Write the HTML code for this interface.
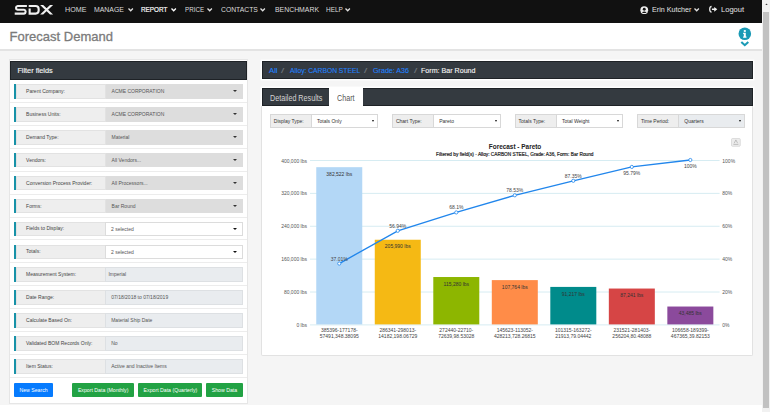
<!DOCTYPE html>
<html><head><meta charset="utf-8"><style>
*{box-sizing:border-box;margin:0;padding:0}
html,body{width:770px;height:412px;overflow:hidden;background:#fff;font-family:"Liberation Sans",sans-serif}
.a{position:absolute}
.t{position:absolute;white-space:nowrap;line-height:1}
#nav{left:0;top:0;width:762px;height:22.8px;background:#111}
.ni{color:#dcdcdc;font-size:7px;top:6px}
#hdr{left:0;top:22.8px;width:762px;height:26.2px;background:#fff}
#bg{left:0;top:49px;width:762px;height:356px;background:#f5f5f5;border-top:2px solid #e3e3e3}
.card{background:#fff}
.dark{background:#343a40;border:0.6px solid #1e2226}
.sep{position:absolute;left:10px;width:237px;height:0.8px;background:#ececec}
.row{position:absolute;left:13.5px;width:229.8px;height:14.5px}
.tb{position:absolute;left:0;top:0;width:2.3px;height:100%;background:#1792a8}
.lb{position:absolute;left:2.3px;top:0;width:90.2px;height:100%;background:#eee;border:0.5px solid #e2e2e2}
.vb{position:absolute;left:92.5px;top:0;width:137.3px;height:100%;background:#ddd}
.vw{background:#fff;border:0.6px solid #dcdcdc;left:91.7px;width:138.1px}
.vr{background:#e9ecef;border:0.5px solid #dde0e3;left:91.9px;width:137.9px}
.lt{position:absolute;left:9.3px;top:3.9px;font-size:5px;color:#444;white-space:nowrap;line-height:1}
.vt{position:absolute;left:6.5px;top:5.2px;font-size:5px;color:#555;white-space:nowrap;line-height:1}
.car{position:absolute;right:6px;top:6.3px;width:0;height:0;border-left:2px solid transparent;border-right:2px solid transparent;border-top:2.2px solid #333}
.btn{position:absolute;top:383.2px;height:13.6px;color:#fff;font-size:5.2px;text-align:center;line-height:15.8px;border-radius:1px}
.sel{position:absolute;top:113.6px;height:14px;border:0.6px solid #d8d8d8;background:#fff}
.sl{position:absolute;left:0;top:0;height:100%;background:#eee;border-right:0.6px solid #d8d8d8}
.st{position:absolute;font-size:5px;color:#333;top:4.3px;white-space:nowrap;line-height:1}
.sc{position:absolute;top:5.2px;width:0;height:0;border-left:1.8px solid transparent;border-right:1.8px solid transparent;border-top:2.4px solid #111}

</style></head><body>
<div id="nav" class="a">
<svg class="a" style="left:0;top:0" width="60" height="22" viewBox="0 0 60 22"><g fill="none" stroke="#f0f0f0" stroke-width="2.1"><path d="M26.9,6.05 H17.6 A1.9,1.9 0 0 0 17.6,9.8 H24 A1.92,1.92 0 0 1 24,13.6 H14.7"/><path d="M28.7,6.05 H35.6 A3.05,3.05 0 0 1 38.65,9.1 V10.55 A3.05,3.05 0 0 1 35.6,13.6 H29.65 V8.4"/></g><path d="M40.1,5.0 H43.2 L53.1,14.6 H50Z M50,5.0 H53.1 L43.2,14.6 H40.1Z" fill="#f0f0f0"/></svg>
<div class="t" style="left:64.7px;top:5.64px;font-size:7.8px;color:#dcdcdc;transform:scaleX(0.915);transform-origin:0 0;">HOME</div>
<div class="t" style="left:94px;top:5.64px;font-size:7.8px;color:#dcdcdc;transform:scaleX(0.887);transform-origin:0 0;">MANAGE</div>
<svg class="a" style="left:127.6px;top:8.0px;overflow:visible" width="5.4" height="3.1"><polyline points="0.5,0.5 2.7,2.8000000000000003 4.9,0.5" fill="none" stroke="#e0e0e0" stroke-width="1.3"/></svg>
<div class="t" style="left:141.2px;top:5.64px;font-size:7.8px;color:#fff;transform:scaleX(0.813);transform-origin:0 0;-webkit-text-stroke:0.2px #fff">REPORT</div>
<svg class="a" style="left:170.6px;top:8.0px;overflow:visible" width="5.4" height="3.1"><polyline points="0.5,0.5 2.7,2.8000000000000003 4.9,0.5" fill="none" stroke="#fff" stroke-width="1.3"/></svg>
<div class="t" style="left:184.7px;top:5.64px;font-size:7.8px;color:#dcdcdc;transform:scaleX(0.801);transform-origin:0 0;">PRICE</div>
<svg class="a" style="left:206.6px;top:8.0px;overflow:visible" width="5.4" height="3.1"><polyline points="0.5,0.5 2.7,2.8000000000000003 4.9,0.5" fill="none" stroke="#e0e0e0" stroke-width="1.3"/></svg>
<div class="t" style="left:220.9px;top:5.64px;font-size:7.8px;color:#dcdcdc;transform:scaleX(0.872);transform-origin:0 0;">CONTACTS</div>
<svg class="a" style="left:260.2px;top:8.0px;overflow:visible" width="5.4" height="3.1"><polyline points="0.5,0.5 2.7,2.8000000000000003 4.9,0.5" fill="none" stroke="#e0e0e0" stroke-width="1.3"/></svg>
<div class="t" style="left:274.6px;top:5.64px;font-size:7.8px;color:#dcdcdc;transform:scaleX(0.883);transform-origin:0 0;">BENCHMARK</div>
<div class="t" style="left:326px;top:5.64px;font-size:7.8px;color:#dcdcdc;transform:scaleX(0.829);transform-origin:0 0;">HELP</div>
<svg class="a" style="left:345.4px;top:8.0px;overflow:visible" width="5.4" height="3.1"><polyline points="0.5,0.5 2.7,2.8000000000000003 4.9,0.5" fill="none" stroke="#e0e0e0" stroke-width="1.3"/></svg>
<svg class="a" style="left:640px;top:5.6px" width="8.5" height="8.5" viewBox="0 0 10 10"><circle cx="5" cy="5" r="4.6" fill="#ececec"/><circle cx="5" cy="3.8" r="1.7" fill="#111"/><path d="M2.3,7.6 Q5,5.4 7.7,7.6 Q5,9.0 2.3,7.6Z" fill="#111"/></svg>
<div class="t" style="left:651.5px;top:6.34px;font-size:7.8px;color:#e4e4e4;transform:scaleX(0.920);transform-origin:0 0;">Erin Kutcher</div>
<svg class="a" style="left:694.2px;top:8.0px;overflow:visible" width="5.4" height="3.1"><polyline points="0.5,0.5 2.7,2.8000000000000003 4.9,0.5" fill="none" stroke="#e0e0e0" stroke-width="1.3"/></svg>
<svg class="a" style="left:708px;top:5.2px" width="10" height="9" viewBox="0 0 10 9"><path d="M3.6,1.5 Q1.7,1.5 1.7,4.3 Q1.7,7.1 3.6,7.1" fill="none" stroke="#e6e6e6" stroke-width="1.3"/><path d="M3.9,3.5 H6.2 V1.9 L9.3,4.3 L6.2,6.7 V5.1 H3.9Z" fill="#f0f0f0"/></svg>
<div class="t" style="left:720.5px;top:6.34px;font-size:7.8px;color:#e4e4e4;transform:scaleX(0.968);transform-origin:0 0;">Logout</div>
</div>
<div id="hdr" class="a"><div class="t" style="left:9.6px;top:7.2px;font-size:13px;color:#7b7b7b;-webkit-text-stroke:0.3px #7b7b7b">Forecast Demand</div></div>
<svg class="a" style="left:738px;top:27.1px" width="14" height="20" viewBox="0 0 14 20"><circle cx="6.8" cy="6.7" r="6.3" fill="#1a9ab5"/><rect x="5.8" y="3.1" width="2" height="1.8" fill="#fff"/><path d="M5.1,5.8 H7.8 V9.4 H8.5 V10.8 H5.1 V9.4 H5.8 V7.1 H5.1Z" fill="#fff"/><polyline points="3.3,15.0 6.8,18.2 10.3,15.0" fill="none" stroke="#1a9ab5" stroke-width="2.1"/></svg>
<div id="bg" class="a"></div>
<div class="a" style="left:762px;top:0;width:8px;height:412px;background:#f1f1f1"></div>
<div class="a" style="left:763px;top:11.9px;width:6px;height:396px;background:#c1c1c1"></div>
<svg class="a" style="left:764.5px;top:3px" width="3" height="2.4" viewBox="0 0 3 2.4"><path d="M0,2.4 L1.5,0.4 L3,2.4Z" fill="#404040"/></svg>
<div class="a card" style="left:8.7px;top:58.5px;width:239.5px;height:345px;border:0.6px solid #e6e6e6"></div>
<div class="a dark" style="left:10px;top:61px;width:237px;height:18.5px"></div>
<div class="t" style="left:17.4px;top:67.2px;font-size:7.3px;color:#f2f2f2;-webkit-text-stroke:0.15px #f2f2f2">Filter fields</div>
<div class="sep" style="top:102.00px"></div>
<div class="row" style="top:84.20px"><div class="tb"></div><div class="lb"><div class="lt">Parent Company:</div></div><div class="vb"><div class="vt" style="left:5.6px;top:5.2px">ACME CORPORATION</div><div class="car"></div></div></div>
<div class="sep" style="top:124.90px"></div>
<div class="row" style="top:107.10px"><div class="tb"></div><div class="lb"><div class="lt">Business Units:</div></div><div class="vb"><div class="vt" style="left:5.6px;top:5.2px">ACME CORPORATION</div><div class="car"></div></div></div>
<div class="sep" style="top:147.80px"></div>
<div class="row" style="top:130.00px"><div class="tb"></div><div class="lb"><div class="lt">Demand Type:</div></div><div class="vb"><div class="vt" style="left:5.6px;top:5.2px">Material</div><div class="car"></div></div></div>
<div class="sep" style="top:170.70px"></div>
<div class="row" style="top:152.90px"><div class="tb"></div><div class="lb"><div class="lt">Vendors:</div></div><div class="vb"><div class="vt" style="left:5.6px;top:5.2px">All Vendors...</div><div class="car"></div></div></div>
<div class="sep" style="top:193.60px"></div>
<div class="row" style="top:175.80px"><div class="tb"></div><div class="lb"><div class="lt">Conversion Process Provider:</div></div><div class="vb"><div class="vt" style="left:5.6px;top:5.2px">All Processors...</div><div class="car"></div></div></div>
<div class="sep" style="top:216.50px"></div>
<div class="row" style="top:198.70px"><div class="tb"></div><div class="lb"><div class="lt">Forms:</div></div><div class="vb"><div class="vt" style="left:5.6px;top:5.2px">Bar Round</div><div class="car"></div></div></div>
<div class="sep" style="top:239.40px"></div>
<div class="row" style="top:221.60px"><div class="tb"></div><div class="lb"><div class="lt">Fields to Display:</div></div><div class="vb vw"><div class="vt" style="left:4.8px;top:4.1px">2 selected</div><div class="car" style="border-top-color:#111;top:5.4px;right:5.6px"></div></div></div>
<div class="sep" style="top:262.30px"></div>
<div class="row" style="top:244.50px"><div class="tb"></div><div class="lb"><div class="lt">Totals:</div></div><div class="vb vw"><div class="vt" style="left:4.8px;top:4.1px">2 selected</div><div class="car" style="border-top-color:#111;top:5.4px;right:5.6px"></div></div></div>
<div class="sep" style="top:285.20px"></div>
<div class="row" style="top:267.40px"><div class="tb"></div><div class="lb"><div class="lt">Measurement System:</div></div><div class="vb vr"><div class="vt" style="left:2.0px;top:4.1px">Imperial</div></div></div>
<div class="sep" style="top:308.10px"></div>
<div class="row" style="top:290.30px"><div class="tb"></div><div class="lb"><div class="lt">Date Range:</div></div><div class="vb vr"><div class="vt" style="left:4.8px;top:4.1px">07/18/2018 to 07/18/2019</div></div></div>
<div class="sep" style="top:331.00px"></div>
<div class="row" style="top:313.20px"><div class="tb"></div><div class="lb"><div class="lt">Calculate Based On:</div></div><div class="vb vr"><div class="vt" style="left:4.8px;top:4.1px">Material Ship Date</div></div></div>
<div class="sep" style="top:353.90px"></div>
<div class="row" style="top:336.10px"><div class="tb"></div><div class="lb"><div class="lt">Validated BOM Records Only:</div></div><div class="vb vr"><div class="vt" style="left:4.8px;top:4.1px">No</div></div></div>
<div class="sep" style="top:376.80px"></div>
<div class="row" style="top:359.00px"><div class="tb"></div><div class="lb"><div class="lt">Item Status:</div></div><div class="vb vr"><div class="vt" style="left:4.8px;top:4.1px">Active and Inactive Items</div></div></div>
<div class="btn" style="left:14.2px;width:38.8px;background:#067bfe">New Search</div>
<div class="btn" style="left:72.3px;width:61.7px;background:#22a244">Export Data (Monthly)</div>
<div class="btn" style="left:138.3px;width:64.2px;background:#22a244">Export Data (Quarterly)</div>
<div class="btn" style="left:206.2px;width:36.5px;background:#22a244">Show Data</div>
<div class="a dark" style="left:262px;top:61px;width:490.6px;height:18.4px;box-shadow:0 0 0 1.4px #fff"></div>
<div class="t" style="left:268.9px;top:66.90px;font-size:7.4px;color:#2281fb;transform:scaleX(1.046);transform-origin:0 0;-webkit-text-stroke:0.12px #2281fb">All</div>
<div class="t" style="left:281.4px;top:66.90px;font-size:7.4px;color:#6f757c;transform:scaleX(1.557);transform-origin:0 0;-webkit-text-stroke:0.12px #6f757c">/</div>
<div class="t" style="left:289.9px;top:66.90px;font-size:7.4px;color:#2281fb;transform:scaleX(0.908);transform-origin:0 0;-webkit-text-stroke:0.12px #2281fb">Alloy: CARBON STEEL</div>
<div class="t" style="left:364.4px;top:66.90px;font-size:7.4px;color:#6f757c;transform:scaleX(1.557);transform-origin:0 0;-webkit-text-stroke:0.12px #6f757c">/</div>
<div class="t" style="left:372.9px;top:66.90px;font-size:7.4px;color:#2281fb;transform:scaleX(0.964);transform-origin:0 0;-webkit-text-stroke:0.12px #2281fb">Grade: A36</div>
<div class="t" style="left:413.8px;top:66.90px;font-size:7.4px;color:#6f757c;transform:scaleX(1.557);transform-origin:0 0;-webkit-text-stroke:0.12px #6f757c">/</div>
<div class="t" style="left:421.4px;top:66.90px;font-size:7.4px;color:#f4f4f4;transform:scaleX(0.962);transform-origin:0 0;-webkit-text-stroke:0.12px #f4f4f4">Form: Bar Round</div>
<div class="a dark" style="left:262px;top:87.6px;width:490.6px;height:18.6px;box-shadow:0 0 0 1.4px #fff"></div>
<div class="a" style="left:329.3px;top:86.5px;width:33.4px;height:19.7px;background:#fff"></div>
<div class="t" style="left:269.9px;top:94.78px;font-size:8.2px;color:#d4d4d4;transform:scaleX(0.878);transform-origin:0 0;">Detailed Results</div>
<div class="t" style="left:337.3px;top:94.78px;font-size:8.2px;color:#555;transform:scaleX(0.878);transform-origin:0 0;">Chart</div>
<div class="a card" style="left:261px;top:106px;width:491.8px;height:249.5px;border:0.6px solid #e2e2e2;border-top:none;border-radius:0 0 2px 2px"></div>
<div class="sel" style="left:269.7px;width:108.6px;background:#fff"><div class="sl" style="width:40.9px"></div><div class="st" style="left:3.1px">Display Type:</div><div class="st" style="left:46.3px">Totals Only</div><div class="sc" style="left:101.3px"></div></div>
<div class="sel" style="left:391.8px;width:109.3px;background:#fff"><div class="sl" style="width:41.0px"></div><div class="st" style="left:3.1px">Chart Type:</div><div class="st" style="left:46.4px">Pareto</div><div class="sc" style="left:102.0px"></div></div>
<div class="sel" style="left:514.5px;width:108.6px;background:#fff"><div class="sl" style="width:41.1px"></div><div class="st" style="left:3.1px">Totals Type:</div><div class="st" style="left:46.5px">Total Weight</div><div class="sc" style="left:101.3px"></div></div>
<div class="sel" style="left:636.9px;width:108.3px;background:#e9ecef"><div class="sl" style="width:41.0px"></div><div class="st" style="left:3.1px">Time Period:</div><div class="st" style="left:46.4px">Quarters</div><div class="sc" style="left:101.0px"></div></div>
<svg class="a" style="left:0;top:0" width="770" height="412" viewBox="0 0 770 412" font-family="Liberation Sans"><line x1="310" y1="324.90" x2="719.6" y2="324.90" stroke="#d6ecf2" stroke-width="1"/><line x1="310" y1="292.02" x2="719.6" y2="292.02" stroke="#d6ecf2" stroke-width="1"/><line x1="310" y1="259.14" x2="719.6" y2="259.14" stroke="#d6ecf2" stroke-width="1"/><line x1="310" y1="226.26" x2="719.6" y2="226.26" stroke="#d6ecf2" stroke-width="1"/><line x1="310" y1="193.38" x2="719.6" y2="193.38" stroke="#d6ecf2" stroke-width="1"/><line x1="310" y1="160.50" x2="719.6" y2="160.50" stroke="#d6ecf2" stroke-width="1"/><text x="307" y="326.90" text-anchor="end" font-size="5" fill="#555">0 lbs</text><text x="722.3" y="327.00" font-size="5" fill="#555">0%</text><text x="307" y="294.02" text-anchor="end" font-size="5" fill="#555">80,000 lbs</text><text x="722.3" y="294.12" font-size="5" fill="#555">20%</text><text x="307" y="261.14" text-anchor="end" font-size="5" fill="#555">160,000 lbs</text><text x="722.3" y="261.24" font-size="5" fill="#555">40%</text><text x="307" y="228.26" text-anchor="end" font-size="5" fill="#555">240,000 lbs</text><text x="722.3" y="228.36" font-size="5" fill="#555">60%</text><text x="307" y="195.38" text-anchor="end" font-size="5" fill="#555">320,000 lbs</text><text x="722.3" y="195.48" font-size="5" fill="#555">80%</text><text x="307" y="162.50" text-anchor="end" font-size="5" fill="#555">400,000 lbs</text><text x="722.3" y="162.60" font-size="5" fill="#555">100%</text><rect x="316.26" y="167.18" width="46" height="157.22" fill="#b3d7f6"/><text x="339.26" y="175.78" text-anchor="middle" font-size="5" fill="#333">382,522 lbs</text><text x="339.26" y="331.80" text-anchor="middle" font-size="5" fill="#444">385396-177178-</text><text x="339.26" y="337.60" text-anchor="middle" font-size="5" fill="#444">57491,348.38095</text><rect x="374.77" y="239.74" width="46" height="84.66" fill="#f5b914"/><text x="397.77" y="248.34" text-anchor="middle" font-size="5" fill="#333">205,990 lbs</text><text x="397.77" y="331.80" text-anchor="middle" font-size="5" fill="#444">286341-298013-</text><text x="397.77" y="337.60" text-anchor="middle" font-size="5" fill="#444">14182,198.06729</text><rect x="433.29" y="277.02" width="46" height="47.38" fill="#8db600"/><text x="456.29" y="285.62" text-anchor="middle" font-size="5" fill="#333">115,280 lbs</text><text x="456.29" y="331.80" text-anchor="middle" font-size="5" fill="#444">272440-22710-</text><text x="456.29" y="337.60" text-anchor="middle" font-size="5" fill="#444">72639,98.53028</text><rect x="491.80" y="280.11" width="46" height="44.29" fill="#ff8c48"/><text x="514.80" y="288.71" text-anchor="middle" font-size="5" fill="#333">107,764 lbs</text><text x="514.80" y="331.80" text-anchor="middle" font-size="5" fill="#444">145623-113052-</text><text x="514.80" y="337.60" text-anchor="middle" font-size="5" fill="#444">428213,728.26815</text><rect x="550.31" y="286.91" width="46" height="37.49" fill="#008b8b"/><text x="573.31" y="295.51" text-anchor="middle" font-size="5" fill="#333">91,217 lbs</text><text x="573.31" y="331.80" text-anchor="middle" font-size="5" fill="#444">101315-163272-</text><text x="573.31" y="337.60" text-anchor="middle" font-size="5" fill="#444">21913,79.04442</text><rect x="608.83" y="288.54" width="46" height="35.86" fill="#d64545"/><text x="631.83" y="297.14" text-anchor="middle" font-size="5" fill="#333">87,241 lbs</text><text x="631.83" y="331.80" text-anchor="middle" font-size="5" fill="#444">231521-281403-</text><text x="631.83" y="337.60" text-anchor="middle" font-size="5" fill="#444">256204,80.48088</text><rect x="667.34" y="306.53" width="46" height="17.87" fill="#8b4a9c"/><text x="690.34" y="315.13" text-anchor="middle" font-size="5" fill="#333">43,485 lbs</text><text x="690.34" y="331.80" text-anchor="middle" font-size="5" fill="#444">106658-189399-</text><text x="690.34" y="337.60" text-anchor="middle" font-size="5" fill="#444">467365,39.82153</text><polyline points="339.26,263.56 397.77,230.79 456.29,212.44 514.80,195.30 573.31,180.80 631.83,166.92 690.34,160.00" fill="none" stroke="#2186ec" stroke-width="1.35"/><circle cx="339.26" cy="263.56" r="1.6" fill="#fff" stroke="#2186ec" stroke-width="0.8"/><text x="339.26" y="260.56" text-anchor="middle" font-size="5" fill="#444">37.01%</text><circle cx="397.77" cy="230.79" r="1.6" fill="#fff" stroke="#2186ec" stroke-width="0.8"/><text x="397.77" y="227.79" text-anchor="middle" font-size="5" fill="#444">56.94%</text><circle cx="456.29" cy="212.44" r="1.6" fill="#fff" stroke="#2186ec" stroke-width="0.8"/><text x="456.29" y="209.44" text-anchor="middle" font-size="5" fill="#444">68.1%</text><circle cx="514.80" cy="195.30" r="1.6" fill="#fff" stroke="#2186ec" stroke-width="0.8"/><text x="514.80" y="192.30" text-anchor="middle" font-size="5" fill="#444">78.53%</text><circle cx="573.31" cy="180.80" r="1.6" fill="#fff" stroke="#2186ec" stroke-width="0.8"/><text x="573.31" y="177.80" text-anchor="middle" font-size="5" fill="#444">87.35%</text><circle cx="631.83" cy="166.92" r="1.6" fill="#fff" stroke="#2186ec" stroke-width="0.8"/><text x="631.83" y="174.82" text-anchor="middle" font-size="5" fill="#444">95.79%</text><circle cx="690.34" cy="160.00" r="1.6" fill="#fff" stroke="#2186ec" stroke-width="0.8"/><text x="690.34" y="167.90" text-anchor="middle" font-size="5" fill="#444">100%</text><text x="488.8" y="149" font-size="6.6" font-weight="bold" fill="#222" textLength="52.5" lengthAdjust="spacingAndGlyphs">Forecast - Pareto</text><text x="436.1" y="155.6" font-size="4.9" fill="#222" stroke="#222" stroke-width="0.18" textLength="157.4" lengthAdjust="spacingAndGlyphs">Filtered by field(s) - Alloy: CARBON STEEL, Grade: A36, Form: Bar Round</text><rect x="731.5" y="138.5" width="8.8" height="7.8" rx="1" fill="#ececec" stroke="#cdcdcd" stroke-width="0.6"/><path d="M733.4,144.4 H738.4 M735.9,139.9 L734.2,143.2 M735.9,139.9 L737.6,143.2" stroke="#aaa" stroke-width="0.7" fill="none"/></svg>
</body></html>
